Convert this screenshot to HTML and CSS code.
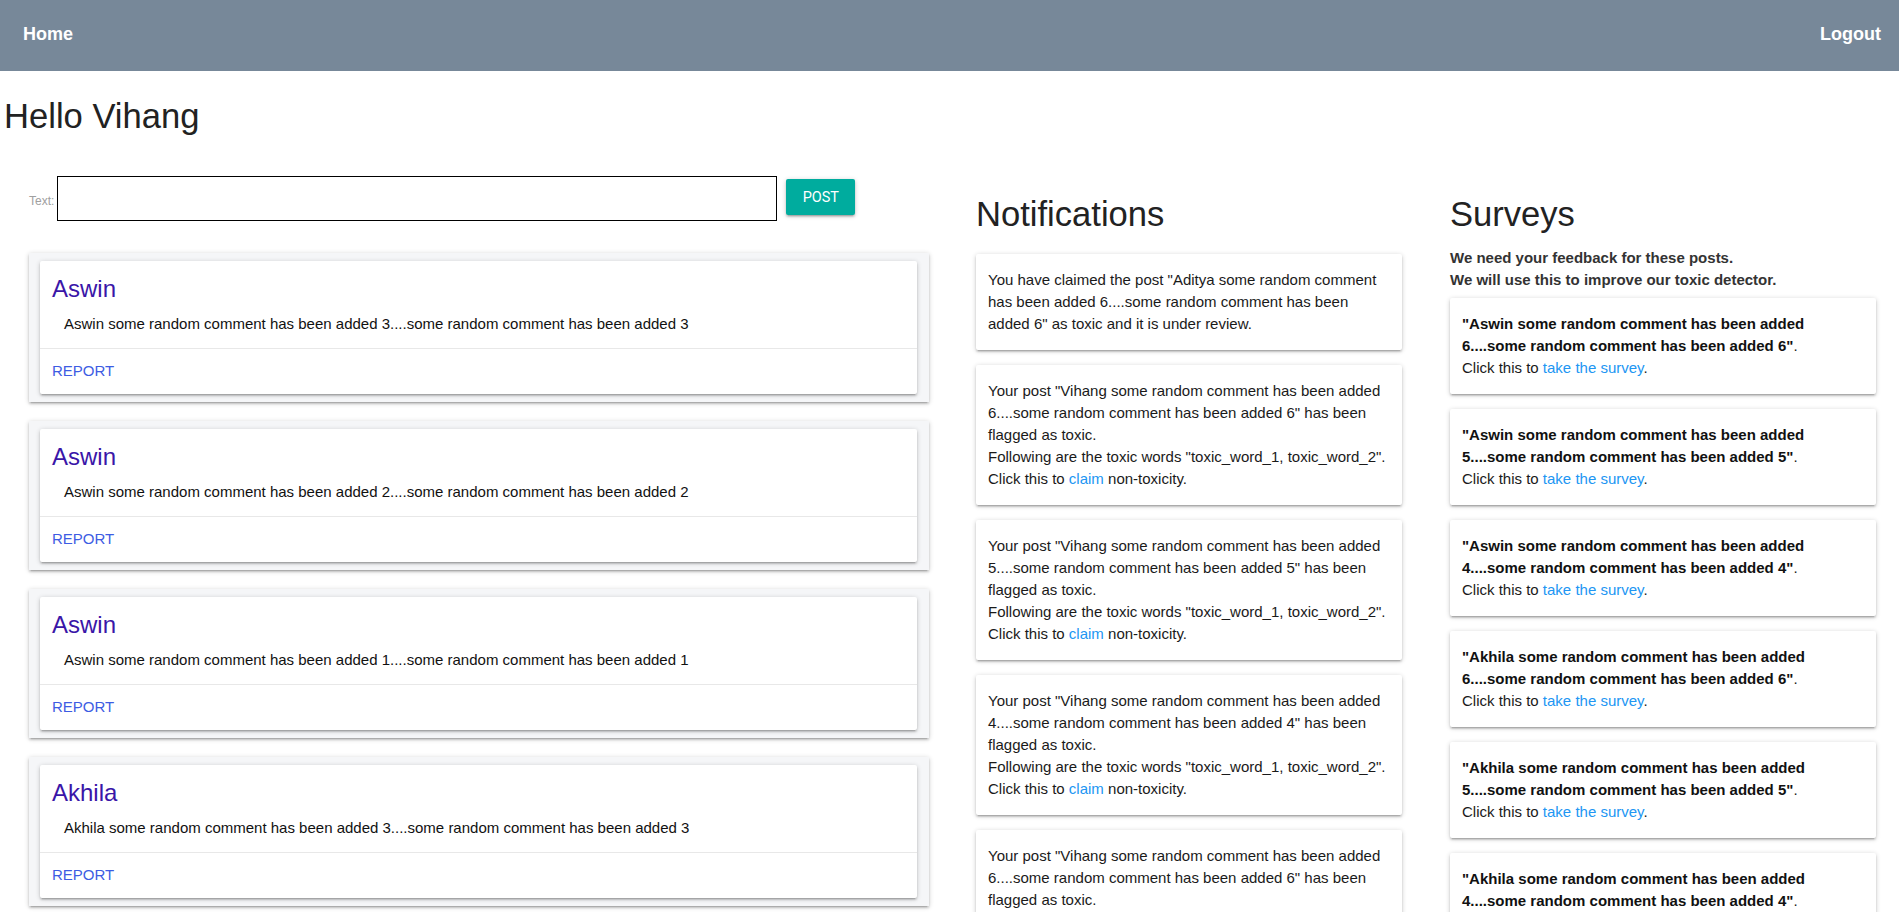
FILE: index.html
```html
<!DOCTYPE html>
<html lang="en">
<head>
<meta charset="utf-8">
<title>Home</title>
<link rel="stylesheet" href="styles.css">
</head>
<body>
<nav class="navbar">
  <a class="nav-link" href="#">Home</a>
  <a class="nav-link" href="#">Logout</a>
</nav>
<h1 class="greeting">Hello Vihang</h1>
<main class="layout">
  <section class="col col-posts">
    <form class="post-form">
      <label class="post-label" for="text">Text:</label>
      <input class="post-input" id="text" type="text">
      <button class="post-btn" type="button">POST</button>
    </form>
    <div class="post-list">
      <div class="post-outer"><div class="post-card">
        <div class="post-head"><div class="post-author">Aswin</div><p class="post-body">Aswin some random comment has been added 3....some random comment has been added 3</p></div>
        <div class="post-action"><a href="#" class="report">REPORT</a></div>
      </div></div>
      <div class="post-outer"><div class="post-card">
        <div class="post-head"><div class="post-author">Aswin</div><p class="post-body">Aswin some random comment has been added 2....some random comment has been added 2</p></div>
        <div class="post-action"><a href="#" class="report">REPORT</a></div>
      </div></div>
      <div class="post-outer"><div class="post-card">
        <div class="post-head"><div class="post-author">Aswin</div><p class="post-body">Aswin some random comment has been added 1....some random comment has been added 1</p></div>
        <div class="post-action"><a href="#" class="report">REPORT</a></div>
      </div></div>
      <div class="post-outer"><div class="post-card">
        <div class="post-head"><div class="post-author">Akhila</div><p class="post-body">Akhila some random comment has been added 3....some random comment has been added 3</p></div>
        <div class="post-action"><a href="#" class="report">REPORT</a></div>
      </div></div>
      <div class="post-outer"><div class="post-card">
        <div class="post-head"><div class="post-author">Akhila</div><p class="post-body">Akhila some random comment has been added 2....some random comment has been added 2</p></div>
        <div class="post-action"><a href="#" class="report">REPORT</a></div>
      </div></div>
    </div>
  </section>

  <section class="col col-notes">
    <h2 class="col-title">Notifications</h2>
    <div class="card-list">
      <div class="info-card">You have claimed the post "Aditya some random comment has been added 6....some random comment has been added 6" as toxic and it is under review.</div>
      <div class="info-card">Your post "Vihang some random comment has been added 6....some random comment has been added 6" has been flagged as toxic.<br>Following are the toxic words "toxic_word_1, toxic_word_2".<br>Click this to <a href="#" class="link">claim</a> non-toxicity.</div>
      <div class="info-card">Your post "Vihang some random comment has been added 5....some random comment has been added 5" has been flagged as toxic.<br>Following are the toxic words "toxic_word_1, toxic_word_2".<br>Click this to <a href="#" class="link">claim</a> non-toxicity.</div>
      <div class="info-card">Your post "Vihang some random comment has been added 4....some random comment has been added 4" has been flagged as toxic.<br>Following are the toxic words "toxic_word_1, toxic_word_2".<br>Click this to <a href="#" class="link">claim</a> non-toxicity.</div>
      <div class="info-card">Your post "Vihang some random comment has been added 6....some random comment has been added 6" has been flagged as toxic.<br>Following are the toxic words "toxic_word_1, toxic_word_2".<br>Click this to <a href="#" class="link">claim</a> non-toxicity.</div>
    </div>
  </section>

  <section class="col col-surveys">
    <h2 class="col-title">Surveys</h2>
    <p class="survey-intro">We need your feedback for these posts.<br>We will use this to improve our toxic detector.</p>
    <div class="card-list">
      <div class="info-card"><b class="survey-post">"Aswin some random comment has been added 6....some random comment has been added 6"</b>.<br>Click this to <a href="#" class="link">take the survey</a>.</div>
      <div class="info-card"><b class="survey-post">"Aswin some random comment has been added 5....some random comment has been added 5"</b>.<br>Click this to <a href="#" class="link">take the survey</a>.</div>
      <div class="info-card"><b class="survey-post">"Aswin some random comment has been added 4....some random comment has been added 4"</b>.<br>Click this to <a href="#" class="link">take the survey</a>.</div>
      <div class="info-card"><b class="survey-post">"Akhila some random comment has been added 6....some random comment has been added 6"</b>.<br>Click this to <a href="#" class="link">take the survey</a>.</div>
      <div class="info-card"><b class="survey-post">"Akhila some random comment has been added 5....some random comment has been added 5"</b>.<br>Click this to <a href="#" class="link">take the survey</a>.</div>
      <div class="info-card"><b class="survey-post">"Akhila some random comment has been added 4....some random comment has been added 4"</b>.<br>Click this to <a href="#" class="link">take the survey</a>.</div>
    </div>
  </section>
</main>
</body>
</html>
```
FILE: styles.css
```css
html, body {
  margin: 0;
  padding: 0;
}
html {
  overflow: hidden;
}
body {
  font-family: "Liberation Sans", Arial, sans-serif;
  color: #1a1a1a;
  background: #fff;
}
.navbar {
  height: 71px;
  background: #778899;
  display: flex;
  justify-content: space-between;
  align-items: center;
  padding: 0 18px 3px 23px;
  box-sizing: border-box;
}
.nav-link {
  color: #fff;
  text-decoration: none;
  font-weight: bold;
  font-size: 18px;
  line-height: 22px;
}
.greeting {
  margin: 0;
  padding: 27px 0 0 4px;
  font-size: 34.6px;
  line-height: 37px;
  font-weight: normal;
  color: #222;
}
.layout {
  display: grid;
  grid-template-columns: 949px 475px 475px;
  align-items: start;
}
.col-posts {
  padding: 41px 20px 0 29px;
}
.col-notes {
  padding: 61px 22px 0 27px;
}
.col-surveys {
  padding: 61px 23px 0 26px;
}
.post-form {
  display: flex;
  align-items: center;
  margin: 0;
}
.post-label {
  font-size: 12px;
  color: #a0a0a0;
  margin-right: 3px;
  padding-top: 4px;
}
.post-input {
  flex: none;
  width: 720px;
  height: 45px;
  box-sizing: border-box;
  border: 1px solid #000;
  padding: 0 8px;
  font-size: 15px;
  margin: 0;
}
.post-btn {
  flex: none;
  margin: 0 0 3px 9px;
  width: 69px;
  height: 36px;
  border: none;
  border-radius: 2px;
  background: #00ac9e;
  color: #fff;
  font-family: Roboto, "Liberation Sans", sans-serif;
  font-size: 14.5px;
  box-shadow: 0 2px 2px 0 rgba(0,0,0,.14), 0 3px 1px -2px rgba(0,0,0,.12), 0 1px 5px 0 rgba(0,0,0,.2);
  padding: 0;
}
.post-list {
  margin-top: 32px;
  display: flex;
  flex-direction: column;
  gap: 19px;
}
.post-outer {
  background: #f5f6f8;
  padding: 8px 12px 8px 11px;
  box-shadow: 0 2px 2px 0 rgba(0,0,0,.14), 0 3px 1px -2px rgba(0,0,0,.12), 0 1px 5px 0 rgba(0,0,0,.2);
}
.post-card {
  background: #fff;
  border-radius: 2px;
  box-shadow: 0 2px 2px 0 rgba(0,0,0,.14), 0 3px 1px -2px rgba(0,0,0,.12), 0 1px 5px 0 rgba(0,0,0,.2);
}
.post-head {
  padding: 13px 13px 13px 12px;
  border-bottom: 1px solid #e8e8e8;
}
.post-author {
  font-size: 24px;
  line-height: 29px;
  color: #3a16a8;
}
.post-body {
  margin: 10px 0 0 12px;
  font-size: 15px;
  line-height: 22px;
  color: #111;
}
.post-action {
  padding: 11px 12px 12px;
  line-height: 22px;
}
.report {
  font-size: 15px;
  color: #3d5ce3;
  text-decoration: none;
}
.col-title {
  margin: 0 0 21px;
  font-size: 34.6px;
  line-height: 37px;
  font-weight: normal;
  color: #222;
}
.col-surveys .col-title {
  margin-bottom: 14px;
}
.survey-intro {
  margin: 0 0 7px;
  font-size: 15px;
  line-height: 22px;
  font-weight: bold;
  color: #333;
}
.card-list {
  display: flex;
  flex-direction: column;
  gap: 15px;
}
.info-card {
  background: #fff;
  border-radius: 2px;
  padding: 15px 12px;
  font-size: 15px;
  line-height: 22px;
  color: #1a1a1a;
  box-shadow: 0 2px 2px 0 rgba(0,0,0,.14), 0 3px 1px -2px rgba(0,0,0,.12), 0 1px 5px 0 rgba(0,0,0,.2);
}
.survey-post {
  color: #111;
}
.link {
  color: #2196f3;
  text-decoration: none;
}
```
